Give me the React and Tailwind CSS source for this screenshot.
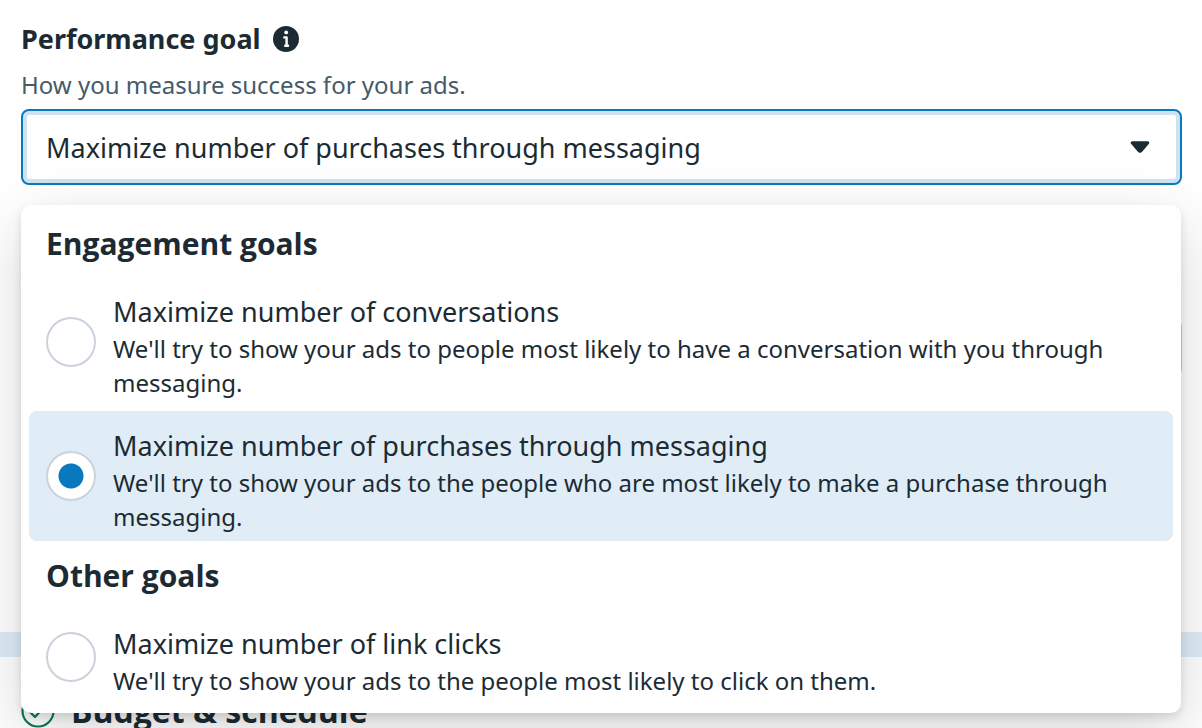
import { useState } from "react";

const goalGroups = [
    {
        title: 'Engagement goals',
        goals: [
            {
                id: 'conversations',
                name: 'Maximize number of conversations',
                description: "We'll try to show your ads to people most likely to have a conversation with you through messaging."
            },
            {
                id: 'purchases',
                name: 'Maximize number of purchases through messaging',
                description: "We'll try to show your ads to the people who are most likely to make a purchase through messaging."
            }
        ]
    },
    {
        title: 'Other goals',
        goals: [
            {
                id: 'clicks',
                name: 'Maximize number of link clicks',
                description: "We'll try to show your ads to the people most likely to click on them."
            }
        ]
    }
];

function InfoIcon() {
    return (
        <svg className="w-[26px] h-[26px]" viewBox="0 0 26 26" aria-hidden="true">
            <circle cx="13" cy="13" r="13" fill="#1c2b33" />
            <circle cx="13.2" cy="6.4" r="1.9" fill="#fff" />
            <path d="M11.3 11.4H13.6V19.8M12.2 19.8H15" stroke="#fff" strokeWidth="2.4" fill="none" strokeLinecap="round" strokeLinejoin="round" />
        </svg>
    )
}

function CaretIcon() {
    return (
        <svg className="pointer-events-none absolute right-8 top-8 w-5 h-3" viewBox="0 0 20 12" aria-hidden="true">
            <path d="M2.2 1.8H17.8L11 9.8Q10 10.8 9 9.8Z" fill="#1c2b33" stroke="#1c2b33" strokeWidth="3" strokeLinejoin="round" />
        </svg>
    )
}

function CheckCircleIcon() {
    return (
        <svg className="w-[34px] h-[34px]" viewBox="0 0 34 34" fill="none" stroke="#0a7c52" strokeWidth="2.2" aria-hidden="true">
            <circle cx="17" cy="17" r="15.5" />
            <path d="M9 18L14 23L24 12" strokeLinecap="round" strokeLinejoin="round" />
        </svg>
    )
}

function GoalOption({ goal, checked, onSelect }) {
    return (
        <label
            htmlFor={goal.id}
            className={`flex items-center gap-[17px] rounded-lg pl-[17px] pr-4 py-[7px] ${checked ? 'bg-[#e0edf7]' : ''}`}
        >
            <input
                type="radio"
                id={goal.id}
                name="performanceGoal"
                checked={checked}
                onChange={() => onSelect(goal.id)}
                className="appearance-none shrink-0 w-[50px] h-[50px] rounded-full border-2 border-[#cbd2dc] bg-white checked:bg-[radial-gradient(circle,#0a78be_12px,#fff_13px)]"
            />
            <span className="flex flex-col pt-2">
                <span className="text-[27px] leading-10">{goal.name}</span>
                <span className="text-[24px] leading-[34px]">{goal.description}</span>
            </span>
        </label>
    )
}

export default function App() {

    const [selectedGoal, setSelectedGoal] = useState('purchases');

    return (
        <div className="h-screen overflow-hidden bg-white text-[#1c2b33] font-['Noto_Sans',sans-serif]">
            <section className="pl-[21px] pr-5 pt-5">
                <div className="flex items-center gap-3">
                    <label htmlFor="goalSelect" className="text-[27px] leading-[38px] font-bold">Performance goal</label>
                    <InfoIcon />
                </div>
                <p className="pt-1 pb-[2px] text-[24px] leading-[45px] text-[#465a69]">How you measure success for your ads.</p>

                <div className="relative">
                    <select
                        id="goalSelect"
                        value={selectedGoal}
                        onChange={(e) => setSelectedGoal(e.target.value)}
                        className="appearance-none block w-full h-[76px] rounded-lg border-2 border-[#0a78be] bg-white px-[23px] pt-[3px] text-[27px] ring-4 ring-inset ring-[#cee3f1] outline-none"
                    >
                        {
                            goalGroups.flatMap((group) => group.goals).map((goal) => (
                                <option value={goal.id} key={goal.id}>{goal.name}</option>
                            ))
                        }
                    </select>
                    <CaretIcon />

                    <div className="absolute left-0 right-px top-24 z-10 flex flex-col gap-3 rounded-[10px] bg-white px-2 pt-4 pb-2 shadow-[0_4px_8px_rgba(0,0,0,0.12),0_20px_64px_rgba(0,0,0,0.16)]">
                        {
                            goalGroups.map((group) => (
                                <fieldset key={group.title}>
                                    <legend className="pl-[17px] text-[30px] leading-[46px] font-bold font-['Open_Sans',sans-serif]">{group.title}</legend>
                                    <div className="flex flex-col gap-1 pt-[10px]">
                                        {
                                            group.goals.map((goal) => (
                                                <GoalOption
                                                    key={goal.id}
                                                    goal={goal}
                                                    checked={goal.id === selectedGoal}
                                                    onSelect={setSelectedGoal}
                                                />
                                            ))
                                        }
                                    </div>
                                </fieldset>
                            ))
                        }
                    </div>
                </div>

                {/* fields covered by the open menu */}
                <div className="h-[447px] pt-[134px]">
                    <div className="h-[58px] rounded-lg border-2 border-[#cbd2dc]"></div>
                </div>
            </section>

            <div className="h-[25px] bg-[#dfedf8]"></div>

            <section className="flex items-center gap-4 pl-[21px] pr-5 pt-[34px]">
                <CheckCircleIcon />
                <h2 className="text-[32px] leading-10 font-bold font-['Open_Sans',sans-serif]">Budget &amp; schedule</h2>
            </section>
        </div>
    )
}
